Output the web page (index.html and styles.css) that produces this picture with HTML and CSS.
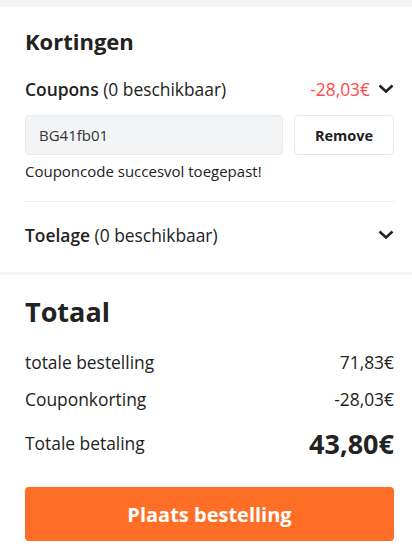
FILE: index.html
```html
<!DOCTYPE html>
<html lang="nl">
<head>
<meta charset="utf-8">
<link rel="stylesheet" href="styles.css">
</head>
<body>
<section class="card discounts">
  <h2 class="title">Kortingen</h2>
  <div class="row">
    <div class="label"><strong>Coupons</strong> (0 beschikbaar)</div>
    <div class="right">
      <span class="neg">-28,03€</span>
      <svg class="chev" width="16" height="10" viewBox="0 0 16 10"><path d="M1.5 1.5 L8 7.5 L14.5 1.5" fill="none" stroke="#222" stroke-width="2.5"/></svg>
    </div>
  </div>
  <div class="coupon">
    <div class="code">BG41fb01</div>
    <button class="remove">Remove</button>
  </div>
  <p class="success">Couponcode succesvol toegepast!</p>
  <div class="divider"></div>
  <div class="row row2">
    <div class="label"><strong>Toelage</strong> (0 beschikbaar)</div>
    <div class="right">
      <svg class="chev" width="16" height="10" viewBox="0 0 16 10"><path d="M1.5 1.5 L8 7.5 L14.5 1.5" fill="none" stroke="#222" stroke-width="2.5"/></svg>
    </div>
  </div>
</section>
<section class="card total">
  <h2 class="big">Totaal</h2>
  <div class="line first"><span>totale bestelling</span><span>71,83€</span></div>
  <div class="line"><span>Couponkorting</span><span>-28,03€</span></div>
  <div class="line pay"><span>Totale betaling</span><span class="amount">43,80€</span></div>
  <button class="order">Plaats bestelling</button>
</section>
</body>
</html>
```
FILE: styles.css
```css
* { box-sizing: border-box; }
body {
  margin: 0;
  background: #f3f4f6;
  font-family: "Open Sans", "Noto Sans", sans-serif;
  color: #222;
}
.card {
  background: #fff;
  padding: 0 18px 0 25px;
}
.discounts {
  margin-top: 7px;
  padding-top: 19px;
  padding-bottom: 25px;
}
.title {
  margin: 0;
  font-size: 22px;
  font-weight: 700;
  line-height: 30px;
}
.row {
  display: flex;
  justify-content: space-between;
  align-items: center;
  margin-top: 21px;
  height: 24px;
  font-size: 17.4px;
}
.label strong { font-weight: 600; }
.right { display: flex; align-items: center; gap: 8px; }
.neg { color: #ff4a4a; }
.chev { display: block; }
.coupon {
  display: flex;
  gap: 11px;
  margin-top: 14px;
}
.code {
  flex: 1;
  height: 40px;
  background: #f3f4f6;
  border: 1px solid #e8e9ec;
  border-radius: 4px;
  font-size: 15px;
  line-height: 38px;
  padding-left: 13px;
  color: #333;
}
.remove {
  width: 100px;
  height: 40px;
  background: #fff;
  border: 1px solid #e5e7eb;
  border-radius: 4px;
  font-family: inherit;
  font-size: 14.5px;
  font-weight: 700;
  color: #222;
}
.success {
  margin: 6px 0 0;
  font-size: 15px;
  line-height: 20px;
  color: #222;
}
.divider {
  height: 1px;
  background: #eceef1;
  margin-top: 20px;
}
.row2 { margin-top: 21px; }
.total {
  margin-top: 3px;
  padding-top: 19px;
  padding-bottom: 5px;
}
.big {
  margin: 0;
  font-size: 27px;
  font-weight: 700;
  line-height: 36px;
}
.line {
  display: flex;
  justify-content: space-between;
  align-items: center;
  font-size: 17.4px;
  height: 24px;
  margin-top: 13px;
}
.line.first { margin-top: 20px; }
.pay { margin-top: 20px; }
.amount { font-size: 27px; font-weight: 700; }
.order {
  display: block;
  width: 100%;
  height: 54px;
  margin-top: 32px;
  border: none;
  border-radius: 4px;
  background: #ff6e26;
  color: #fff;
  font-family: inherit;
  font-size: 20px;
  font-weight: 700;
}
```
